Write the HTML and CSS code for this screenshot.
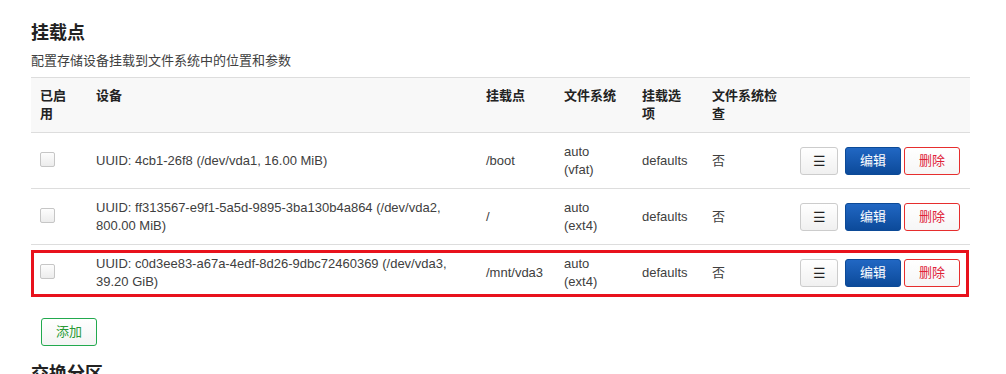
FILE: index.html
```html
<!DOCTYPE html>
<html lang="zh-CN">
<head>
<meta charset="utf-8">
<title>挂载点</title>
<link rel="stylesheet" href="styles.css">
</head>
<body>
<div class="page">
  <h2 class="section-title">挂载点</h2>
  <p class="section-desc">配置存储设备挂载到文件系统中的位置和参数</p>
  <div class="table-wrap">
    <table class="mounts">
      <colgroup>
        <col class="c-en"><col class="c-dev"><col class="c-mp"><col class="c-fs"><col class="c-opt"><col class="c-chk"><col class="c-act">
      </colgroup>
      <thead>
        <tr>
          <th>已启用</th><th>设备</th><th>挂载点</th><th>文件系统</th><th>挂载选项</th><th>文件系统检查</th><th></th>
        </tr>
      </thead>
      <tbody>
        <tr>
          <td><span class="cbox"></span></td>
          <td>UUID: 4cb1-26f8 (/dev/vda1, 16.00 MiB)</td>
          <td>/boot</td>
          <td class="fs">auto (vfat)</td>
          <td>defaults</td>
          <td>否</td>
          <td><div class="actions"><button class="btn btn-more">☰</button><button class="btn btn-edit">编辑</button><button class="btn btn-del">删除</button></div></td>
        </tr>
        <tr>
          <td><span class="cbox"></span></td>
          <td>UUID: ff313567-e9f1-5a5d-9895-3ba130b4a864 (/dev/vda2, 800.00 MiB)</td>
          <td>/</td>
          <td class="fs">auto (ext4)</td>
          <td>defaults</td>
          <td>否</td>
          <td><div class="actions"><button class="btn btn-more">☰</button><button class="btn btn-edit">编辑</button><button class="btn btn-del">删除</button></div></td>
        </tr>
        <tr>
          <td><span class="cbox"></span></td>
          <td>UUID: c0d3ee83-a67a-4edf-8d26-9dbc72460369 (/dev/vda3, 39.20 GiB)</td>
          <td>/mnt/vda3</td>
          <td class="fs">auto (ext4)</td>
          <td>defaults</td>
          <td>否</td>
          <td><div class="actions"><button class="btn btn-more">☰</button><button class="btn btn-edit">编辑</button><button class="btn btn-del">删除</button></div></td>
        </tr>
      </tbody>
    </table>
    <div class="highlight"></div>
  </div>
  <div class="add-row"><button class="btn btn-add">添加</button></div>
  <h2 class="section-title next">交换分区</h2>
</div>
</body>
</html>
```
FILE: styles.css
```css
html, body {
  margin: 0;
  padding: 0;
  background: #fff;
}
body {
  font-family: "Liberation Sans", Arial, "Noto Sans CJK SC", sans-serif;
  font-size: 13px;
  color: #404040;
  overflow: hidden;
}
.page {
  padding: 0 36px 0 31px;
}
.section-title {
  margin: 0;
  padding-top: 20px;
  font-size: 18px;
  line-height: 26px;
  font-weight: bold;
  color: #222;
}
.section-desc {
  margin: 6px 0 0;
  line-height: 18px;
  font-size: 13px;
  color: #404040;
}
.table-wrap {
  position: relative;
  margin-top: 7px;
}
.mounts {
  width: 939px;
  border-collapse: collapse;
  table-layout: fixed;
}
.c-en { width: 56px; }
.c-dev { width: 390px; }
.c-mp { width: 78px; }
.c-fs { width: 78px; }
.c-opt { width: 70px; }
.c-chk { width: 87px; }
.c-act { width: 180px; }
.mounts th, .mounts td {
  padding: 10px 10px 9px 9px;
  line-height: 18px;
  text-align: left;
  border-top: 1px solid #ddd;
}
.mounts th {
  background: #f8f8f8;
  font-weight: bold;
  color: #222;
  vertical-align: top;
  padding-top: 9px;
  padding-bottom: 9px;
  border-bottom: 1px solid #ddd;
}
.mounts td {
  vertical-align: middle;
}
.mounts td.fs {
  padding-right: 24px;
}
.cbox {
  display: block;
  width: 13px;
  height: 13px;
  border: 1px solid #c6c6c6;
  border-radius: 2px;
  background: linear-gradient(#fdfdfd, #ececec);
  margin-top: -4px;
}
.actions {
  display: flex;
  justify-content: flex-end;
  gap: 3px;
}
.btn {
  font-family: "Liberation Sans", Arial, "Noto Sans CJK SC", sans-serif;
  font-size: 13px;
  height: 28px;
  padding: 0;
  border-radius: 3px;
  cursor: pointer;
  line-height: 26px;
}
.btn-more {
  width: 38px;
  margin-right: 4px;
  border: 1px solid #ccc;
  background: linear-gradient(#fff, #f0f0f0);
  color: #222;
  font-size: 14px;
}
.btn-edit {
  width: 56px;
  border: 1px solid #0c4a97;
  background: linear-gradient(#2167c3, #0c4a9a);
  color: #fff;
}
.btn-del {
  width: 56px;
  border: 1px solid #e62e2e;
  background: linear-gradient(#fff, #f6f6f6);
  color: #e0233a;
}
.highlight {
  position: absolute;
  left: 0;
  top: 173px;
  width: 932px;
  height: 41px;
  border: 3px solid #e8121c;
  pointer-events: none;
}
.add-row {
  padding: 18px 0 0 10px;
}
.btn-add {
  width: 56px;
  border: 1px solid #22a94e;
  background: linear-gradient(#fff, #f4f4f4);
  color: #2a9a35;
}
.section-title.next {
  padding-top: 15px;
}
```
